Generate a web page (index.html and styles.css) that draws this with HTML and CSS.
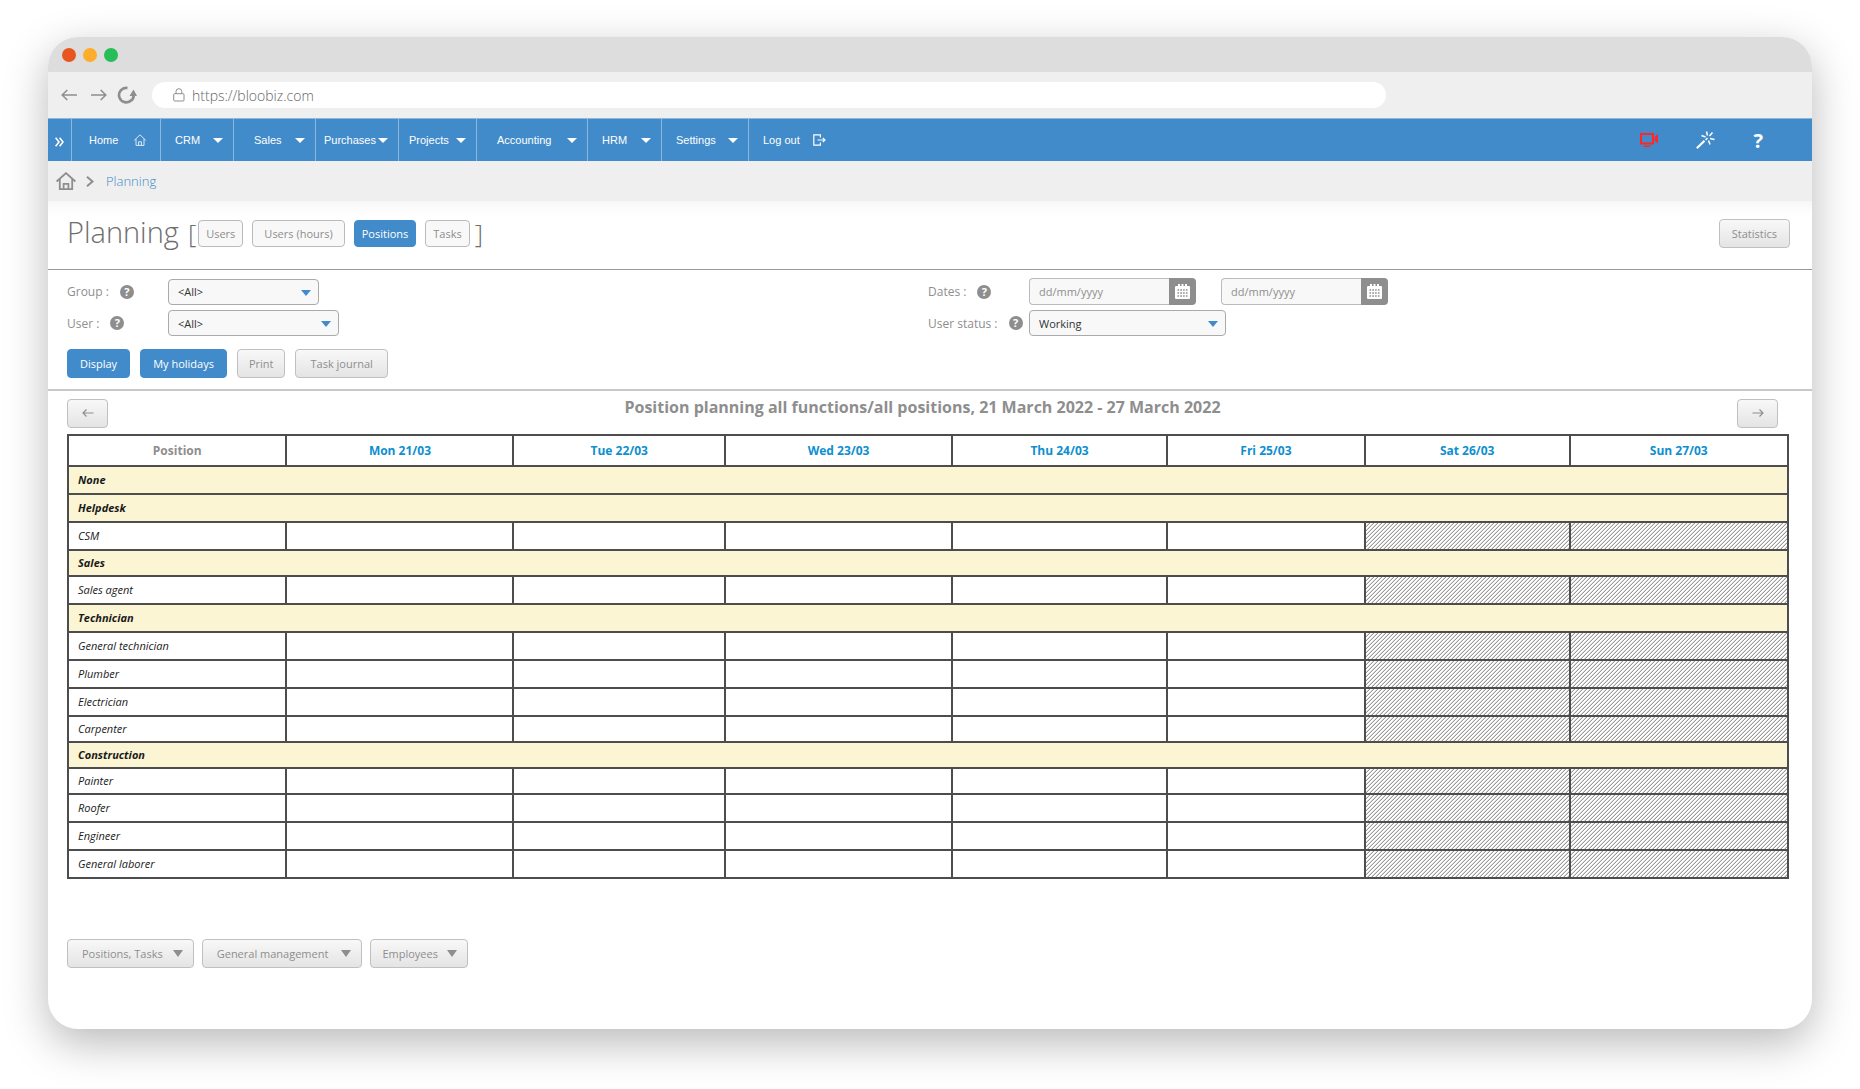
FILE: index.html
```html
<!DOCTYPE html>
<html lang="en">
  <head>
    <meta charset="utf-8">
    <meta name="viewport" content="width=device-width, initial-scale=1.0">
    <title>Planning</title>
    <link rel="stylesheet" href="styles.css">
  </head>
  <body>
    <div class="window">
      <div class="titlebar">
        <span class="dot dot-red"></span>
        <span class="dot dot-yellow"></span>
        <span class="dot dot-green"></span>
      </div>

      <div class="toolbar">
        <button class="tool" type="button" aria-label="Back">
          <svg width="16" height="12" viewBox="0 0 16 12" fill="none" stroke="currentColor" stroke-width="1.5"><path d="M16 6H1.2M6.3 1 1.2 6l5.1 5"/></svg>
        </button>
        <button class="tool" type="button" aria-label="Forward">
          <svg width="16" height="12" viewBox="0 0 16 12" fill="none" stroke="currentColor" stroke-width="1.5"><path d="M0 6h14.8M9.7 1l5.1 5-5.1 5"/></svg>
        </button>
        <button class="tool tool-reload" type="button" aria-label="Reload">
          <svg width="20" height="18" viewBox="0 0 20 18"><path d="M10.500 2A7.200 7.200 0 1 0 14.500 14" fill="none" stroke="currentColor" stroke-width="2.600"/><path d="M12.500 10 16.500 3.500 20 10h-2c-.2 2.400-1.200 4.200-2.800 5.400l-1.700-1.900c1-.9 1.500-2 1.600-3.500z" fill="currentColor"/></svg>
        </button>
        <div class="address">
          <svg width="12" height="14" viewBox="0 0 12 14" fill="none" stroke="currentColor"><rect x=".7" y="5.700" width="10.300" height="7.300" rx="1"/><path d="M3 5.700V3.600a2.900 2.900 0 0 1 5.800 0v2.100"/></svg>
          <input class="address-input" type="text" aria-label="Address" value="https://bloobiz.com">
        </div>
      </div>

      <nav class="menu">
        <a class="menu-item menu-toggle" href="#" aria-label="Expand">
          <svg width="9" height="10" viewBox="0 0 9 10" fill="none" stroke="currentColor" stroke-width="1.600"><path d="M.6.700 4 5 .6 9.300M4.600.700 8 5 4.600 9.300"/></svg>
        </a>
        <a class="menu-item menu-home" href="#">Home
          <svg width="12" height="12" viewBox="0 0 12 12" fill="none" stroke="currentColor" stroke-width=".8"><path d="M.3 6.300 6 .8l5.700 5.500M2 5v6.400h8V5M4.600 11.400V7.800h2.800v3.600"/></svg>
        </a>
        <a class="menu-item menu-crm" href="#">CRM <span class="caret"></span></a>
        <a class="menu-item menu-sales" href="#">Sales <span class="caret"></span></a>
        <a class="menu-item menu-purchases" href="#">Purchases <span class="caret"></span></a>
        <a class="menu-item menu-projects" href="#">Projects <span class="caret"></span></a>
        <a class="menu-item menu-accounting" href="#">Accounting <span class="caret"></span></a>
        <a class="menu-item menu-hrm" href="#">HRM <span class="caret"></span></a>
        <a class="menu-item menu-settings" href="#">Settings <span class="caret"></span></a>
        <a class="menu-item menu-logout" href="#">Log out
          <svg width="13" height="12" viewBox="0 0 13 12" fill="none" stroke="currentColor" stroke-width="1.200"><path d="M7.400 3.500V.8H.8v10.400h6.600V8.500M4.500 6H12M9.800 3.800 12 6 9.800 8.200"/></svg>
        </a>
        <div class="menu-tools">
          <a class="menu-tool menu-video" href="#" aria-label="Video">
            <svg width="18" height="14" viewBox="0 0 18 14"><path d="M1 1h12v9.500H1z" fill="none" stroke="currentColor" stroke-width="2"/><path d="M14.500 4 18 1v9.500l-3.500-3zM3.500 12.500h7V14h-7z" fill="currentColor"/></svg>
          </a>
          <a class="menu-tool" href="#" aria-label="Wizard">
            <svg width="19" height="18" viewBox="0 0 19 18" fill="none" stroke="currentColor" stroke-width="1.500"><path d="M.8 17.200 8.500 9.800" stroke-width="2.200"/><path d="M5.500 4.500l4 1.500M10.500.500l1 4M16.500 1.500l-3 3.500M18.500 8.500l-4.500-1M12.500 9.500l1.500 4"/><path d="M9.500 9l2-2"/></svg>
          </a>
          <a class="menu-tool menu-help" href="#" aria-label="Help">?</a>
        </div>
      </nav>

      <div class="breadcrumb">
        <a class="crumb-home" href="#" aria-label="Home">
          <svg width="20" height="18" viewBox="0 0 20 18" fill="none" stroke="currentColor" stroke-width="1.800"><path d="M.6 9.500 10 1.100l9.400 8.400M3.800 7v10.100h12.400V7M7.600 17v-5.200h4.800V17"/></svg>
        </a>
        <svg class="crumb-sep" width="8" height="11" viewBox="0 0 8 11" fill="none" stroke="currentColor" stroke-width="2"><path d="M1 .8l5.500 4.700L1 10.200"/></svg>
        <a class="crumb-link" href="#">Planning</a>
      </div>

      <header class="heading">
        <h1>Planning</h1>
        <span class="bracket">[</span>
        <div class="tabs">
          <button class="tab" type="button">Users</button>
          <button class="tab tab-hours" type="button">Users (hours)</button>
          <button class="tab tab-active" type="button">Positions</button>
          <button class="tab" type="button">Tasks</button>
        </div>
        <span class="bracket">]</span>
        <button class="btn btn-stats" type="button">Statistics</button>
      </header>

      <form class="filters">
        <div class="fields">
          <div class="field">
            <div class="field-label"><label for="group">Group :</label><span class="hint">?</span></div>
            <span class="select select-group"><select id="group"><option>&lt;All&gt;</option></select></span>
          </div>
          <div class="field">
            <div class="field-label"><label for="date-from">Dates :</label><span class="hint">?</span></div>
            <div class="date">
              <input id="date-from" type="text" placeholder="dd/mm/yyyy">
              <button class="date-btn" type="button" aria-label="Pick start date">
                <svg width="15" height="15" viewBox="0 0 15 15"><path d="M1 2h2V0h2v2h1.500V0h2v2H10V0h2v2h2q1 0 1 1v11q0 1-1 1H1q-1 0-1-1V3q0-1 1-1z" fill="#fff"/><path d="M2.500 6h10M2.500 9h10M2.500 12h10" stroke="#8e8e8e" stroke-width="1.500" stroke-dasharray="1.600 1.200"/></svg>
              </button>
            </div>
            <div class="date date-to">
              <input type="text" placeholder="dd/mm/yyyy" aria-label="End date">
              <button class="date-btn" type="button" aria-label="Pick end date">
                <svg width="15" height="15" viewBox="0 0 15 15"><path d="M1 2h2V0h2v2h1.500V0h2v2H10V0h2v2h2q1 0 1 1v11q0 1-1 1H1q-1 0-1-1V3q0-1 1-1z" fill="#fff"/><path d="M2.500 6h10M2.500 9h10M2.500 12h10" stroke="#8e8e8e" stroke-width="1.500" stroke-dasharray="1.600 1.200"/></svg>
              </button>
            </div>
          </div>
          <div class="field">
            <div class="field-label"><label for="user">User :</label><span class="hint">?</span></div>
            <span class="select select-user"><select id="user"><option>&lt;All&gt;</option></select></span>
          </div>
          <div class="field">
            <div class="field-label"><label for="status">User status :</label><span class="hint">?</span></div>
            <span class="select select-status"><select id="status"><option>Working</option></select></span>
          </div>
        </div>
        <div class="actions">
          <button class="btn btn-blue" type="button">Display</button>
          <button class="btn btn-blue" type="button">My holidays</button>
          <button class="btn btn-print" type="button">Print</button>
          <button class="btn" type="button">Task journal</button>
        </div>
      </form>

      <main class="planning">
        <div class="week">
          <button class="btn btn-arrow" type="button" aria-label="Previous week">
            <svg width="12" height="8" viewBox="0 0 12 8" fill="none" stroke="currentColor" stroke-width="1.200"><path d="M11.500 4H1M4.500.5 1 4l3.500 3.500"/></svg>
          </button>
          <h2>Position planning all functions/all positions, 21 March 2022 - 27 March 2022</h2>
          <button class="btn btn-arrow" type="button" aria-label="Next week">
            <svg width="12" height="8" viewBox="0 0 12 8" fill="none" stroke="currentColor" stroke-width="1.200"><path d="M.5 4H11M7.500.5 11 4 7.500 7.500"/></svg>
          </button>
        </div>

        <table class="grid">
          <colgroup>
            <col class="col-position"><col class="col-mon"><col class="col-tue"><col class="col-wed">
            <col class="col-thu"><col class="col-fri"><col class="col-sat"><col class="col-sun">
          </colgroup>
          <thead>
            <tr><th class="grid-title">Position</th><th>Mon 21/03</th><th>Tue 22/03</th><th>Wed 23/03</th><th>Thu 24/03</th><th>Fri 25/03</th><th>Sat 26/03</th><th>Sun 27/03</th></tr>
          </thead>
          <tbody>
            <tr class="group"><td colspan="8">None</td></tr>
            <tr class="group"><td colspan="8">Helpdesk</td></tr>
            <tr><td>CSM</td><td></td><td></td><td></td><td></td><td></td><td class="off"></td><td class="off"></td></tr>
            <tr class="group short"><td colspan="8">Sales</td></tr>
            <tr><td>Sales agent</td><td></td><td></td><td></td><td></td><td></td><td class="off"></td><td class="off"></td></tr>
            <tr class="group"><td colspan="8">Technician</td></tr>
            <tr><td>General technician</td><td></td><td></td><td></td><td></td><td></td><td class="off"></td><td class="off"></td></tr>
            <tr><td>Plumber</td><td></td><td></td><td></td><td></td><td></td><td class="off"></td><td class="off"></td></tr>
            <tr><td>Electrician</td><td></td><td></td><td></td><td></td><td></td><td class="off"></td><td class="off"></td></tr>
            <tr class="short"><td>Carpenter</td><td></td><td></td><td></td><td></td><td></td><td class="off"></td><td class="off"></td></tr>
            <tr class="group short"><td colspan="8">Construction</td></tr>
            <tr class="short"><td>Painter</td><td></td><td></td><td></td><td></td><td></td><td class="off"></td><td class="off"></td></tr>
            <tr><td>Roofer</td><td></td><td></td><td></td><td></td><td></td><td class="off"></td><td class="off"></td></tr>
            <tr><td>Engineer</td><td></td><td></td><td></td><td></td><td></td><td class="off"></td><td class="off"></td></tr>
            <tr><td>General laborer</td><td></td><td></td><td></td><td></td><td></td><td class="off"></td><td class="off"></td></tr>
          </tbody>
        </table>

        <div class="links">
          <button class="btn btn-drop" type="button">Positions, Tasks <span class="caret"></span></button>
          <button class="btn btn-drop btn-wide" type="button">General management <span class="caret"></span></button>
          <button class="btn btn-drop btn-tight" type="button">Employees <span class="caret"></span></button>
        </div>
      </main>
    </div>
  </body>
</html>
```

FILE: styles.css
```css
* {
  box-sizing: border-box;
}

body {
  margin: 0;
  padding: 37px 48px 60px;
  background: #fff;
  color: #8e8e8e;
  font-family: "Open Sans", "Noto Sans", sans-serif;
  font-size: 12px;
}

a {
  text-decoration: none;
}

button, input, select {
  margin: 0;
  font-family: inherit;
  font-size: 11px;
}

svg {
  display: block;
  flex: none;
}

/* browser window */
.window {
  overflow: hidden;
  border-radius: 30px;
  background: #fff;
  box-shadow: 0 14px 44px rgba(0, 0, 0, .28);
}

.titlebar {
  display: flex;
  align-items: center;
  gap: 7px;
  height: 35px;
  padding-left: 14px;
  background: #ddd;
}

.dot {
  width: 14px;
  height: 14px;
  border-radius: 50%;
}

.dot-red { background: #e7561f; }
.dot-yellow { background: #fdad2b; }
.dot-green { background: #27bd58; }

.toolbar {
  display: flex;
  align-items: center;
  height: 46px;
  padding-left: 13px;
  background: #efefef;
}

.tool {
  padding: 0;
  border: 0;
  margin-right: 14px;
  background: none;
  color: #8e8e8e;
}

.tool-reload {
  margin-left: -4px;
  margin-right: 15px;
}

.address {
  display: flex;
  align-items: center;
  gap: 7px;
  width: 70.5%;
  height: 26px;
  padding-left: 21px;
  border-radius: 13px;
  background: #fff;
}

.address-input {
  flex: 1;
  padding: 0;
  border: 0;
  background: none;
  color: #666;
  font-size: 14px;
  font-weight: 300;
}

/* main menu */
.menu {
  display: flex;
  height: 43px;
  border-top: 1px solid #8db7dc;
  background: #428bca;
}

.menu-item {
  display: flex;
  align-items: center;
  justify-content: space-between;
  padding: 0 10px 0 14px;
  border-right: 1px solid #8db7dc;
  color: #fff;
  font-family: "Liberation Sans", Arial, sans-serif;
  font-size: 11px;
  white-space: nowrap;
}

.menu-toggle { width: 24px; padding: 4px 0 0 7px; }
.menu-home { width: 89px; padding-left: 17px; padding-right: 14px; }
.menu-crm { width: 73px; }
.menu-sales { width: 82px; padding-left: 20px; }
.menu-purchases { width: 83px; padding-left: 8px; }
.menu-projects { width: 78px; padding-left: 10px; }
.menu-accounting { width: 111px; padding-left: 20px; }
.menu-hrm { width: 74px; }
.menu-settings { width: 87px; }
.menu-logout { gap: 13px; border-right: 0; }

.caret {
  border: 5px solid transparent;
  border-top-color: currentColor;
  border-bottom: 0;
}

.menu-tools {
  display: flex;
  align-items: center;
  gap: 38px;
  margin-left: auto;
  padding-right: 49px;
}

.menu-tool {
  color: #fff;
}

.menu-video {
  color: #ff2626;
}

.menu-help {
  font-size: 20px;
  font-weight: bold;
}

.breadcrumb {
  display: flex;
  align-items: center;
  height: 40px;
  padding-left: 8px;
  background: #efefef;
}

.crumb-home {
  color: #8e8e8e;
}

.crumb-sep {
  margin: 0 12px 0 10px;
}

.crumb-link {
  color: #428bca;
  font-size: 13px;
  font-weight: 300;
}

/* page heading */
.heading {
  display: flex;
  align-items: center;
  height: 69px;
  padding: 0 22px 4px 19px;
  border-bottom: 1px solid #999;
  background: linear-gradient(#f7f7f7, #fff 14px);
}

h1 {
  margin: 0 9px 0 0;
  padding-bottom: 4px;
  color: #6e6e6e;
  font-size: 29px;
  font-weight: 300;
}

.bracket {
  color: #6e6e6e;
  font-size: 26px;
  font-weight: 300;
}

.tabs {
  display: flex;
  gap: 9px;
  margin: 0 5px 0 2px;
}

.tab {
  height: 27px;
  padding: 0 7px;
  border: 1px solid #bbb;
  border-radius: 4px;
  background: #f8f8f8;
  color: #8e8e8e;
}

.tab-hours {
  padding: 0 11px;
}

.tab-active {
  border-color: #428bca;
  background: #428bca;
  color: #fff;
}

.btn {
  height: 29px;
  padding: 0 14px;
  border: 1px solid #c0c0c0;
  border-radius: 4px;
  background: linear-gradient(#f8f8f8, #e4e4e4);
  color: #8e8e8e;
}

.btn-blue {
  padding: 0 12px;
  border-color: #428bca;
  background: #428bca;
  color: #fff;
}

.btn-stats {
  padding: 0 12px;
  margin-left: auto;
}

/* filters */
.filters {
  padding: 8px 23px 11px 19px;
  border-bottom: 2px solid #c8c8c8;
}

.fields {
  display: grid;
  grid-template-columns: 1fr 1fr;
  row-gap: 5px;
}

.field {
  display: flex;
  align-items: center;
}

.field-label {
  display: flex;
  align-items: center;
  gap: 11px;
  width: 101px;
}

.hint {
  width: 14px;
  height: 14px;
  border-radius: 50%;
  background: #8e8e8e;
  color: #fff;
  font-size: 11px;
  font-weight: bold;
  line-height: 14px;
  text-align: center;
}

.select {
  position: relative;
}

.select::after {
  content: "";
  position: absolute;
  top: 11px;
  right: 8px;
  border: 5px solid transparent;
  border-top: 6px solid #428bca;
  border-bottom: 0;
  pointer-events: none;
}

select {
  display: block;
  width: 100%;
  height: 26px;
  padding: 0 9px;
  border: 1px solid #aaa;
  border-radius: 4px;
  appearance: none;
  background: #f8f8f8;
  color: #333;
}

.select-group { width: 151px; }
.select-user { width: 171px; }
.select-status { width: 197px; }

.date {
  display: flex;
}

.date-to {
  margin-left: 25px;
}

.date input {
  width: 140px;
  height: 27px;
  padding: 0 9px;
  border: 1px solid #bbb;
  border-right: 0;
  border-radius: 4px 0 0 4px;
  background: #f8f8f8;
}

.date input::placeholder {
  color: #8e8e8e;
}

.date-btn {
  width: 27px;
  height: 27px;
  padding: 0 6px;
  border: 0;
  border-radius: 0 4px 4px 0;
  background: #8e8e8e;
}

.actions {
  display: flex;
  gap: 10px;
  margin-top: 13px;
}

.btn-print {
  padding: 0 11px;
}

/* planning table */
.planning {
  padding: 6px 23px 61px 19px;
}

.week {
  display: flex;
  align-items: center;
  justify-content: space-between;
  padding-right: 11px;
}

h2 {
  margin: 0 0 12px;
  font-size: 16px;
  line-height: 20px;
}

.btn-arrow {
  width: 41px;
}

.grid {
  width: 100%;
  margin-top: 5px;
  border-collapse: collapse;
  table-layout: fixed;
  color: #1a1a1a;
}

.col-position, .col-sun { width: 12.7%; }
.col-mon, .col-wed { width: 13.2%; }
.col-tue { width: 12.3%; }
.col-thu { width: 12.5%; }
.col-fri { width: 11.5%; }
.col-sat { width: 11.9%; }

.grid th, .grid td {
  height: 28px;
  padding: 0 10px 1px 9px;
  border: 2px solid #4d4d4d;
}

.grid th {
  height: 31px;
  padding: 0 10px;
  color: #0d8fd0;
}

.grid .grid-title {
  color: #8e8e8e;
}

.grid td {
  font-size: 11px;
  font-style: italic;
}

.grid .short td {
  height: 26px;
}

.grid .group td {
  background: #fcf5d4;
  font-weight: bold;
}

/* days off */
.grid .off {
  background: linear-gradient(135deg, #fff 31.25%, #ddd 31.25% 43.75%, #999 43.75% 56.25%, #fff 56.25% 81.25%, #ddd 81.25% 93.75%, #fff 93.75%) 0 0 / 4px 4px;
}

.links {
  display: flex;
  gap: 8px;
  margin-top: 60px;
}

.btn-drop {
  display: flex;
  align-items: center;
  gap: 10px;
  padding: 0 10px 0 14px;
}

.btn-wide {
  gap: 13px;
}

.btn-tight {
  gap: 9px;
  padding-left: 11px;
}

.btn-drop .caret {
  border-top-width: 7px;
}
```
